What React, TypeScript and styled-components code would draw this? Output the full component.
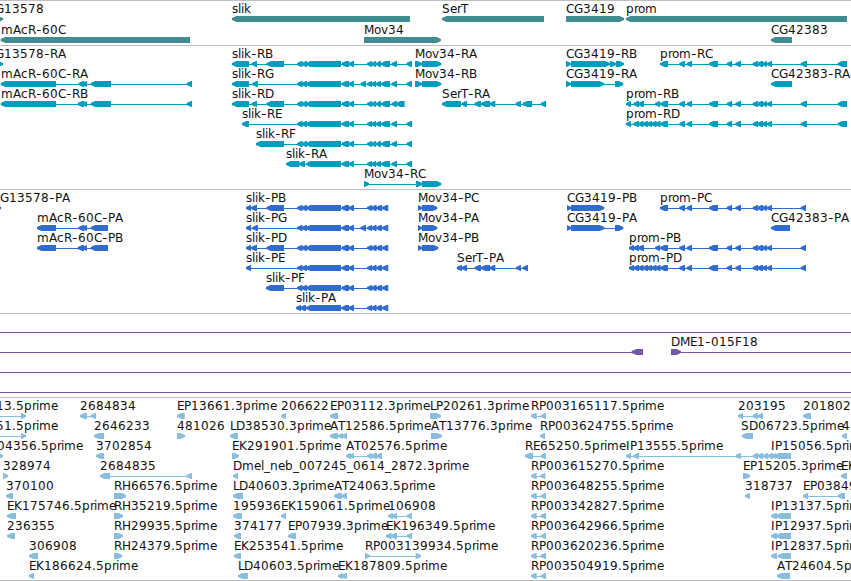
import styled, { createGlobalStyle } from "styled-components";

const GlobalStyle = createGlobalStyle`
  body {
    margin: 0;
    background: #ffffff;
    overflow: hidden;
  }
`;

const Browser = styled.main`
  display: flex;
  flex-direction: column;
  width: 851px;
  height: 581px;
  overflow: hidden;
  box-sizing: border-box;
  border-bottom: 1px solid #bebebe;
`;

const TrackPanel = styled.section<{ $height: number; $color: string }>`
  display: flex;
  flex-direction: column;
  flex: none;
  box-sizing: border-box;
  height: ${(props) => props.$height}px;
  padding-top: 1px;
  border-top: 1px solid #bebebe;
  color: ${(props) => props.$color};
`;

const Lane = styled.svg<{ $height: number }>`
  display: block;
  flex: none;
  width: 851px;
  height: ${(props) => props.$height}px;
  overflow: hidden;
  fill: currentColor;
`;

const Label = styled.text`
  font-family: "DejaVu Sans", sans-serif;
  font-size: 12px;
  fill: #111111;
`;

// Inter has the longer, thinner hyphen
const Dash = styled.tspan`
  font-family: Inter, sans-serif;
`;

type Block = [number, number];

interface Feature {
  label?: string;
  labelX?: number;
  right?: boolean;
  // where the thin line runs when it goes past the blocks
  from?: number;
  to?: number;
  blocks: Block[];
}

interface Track {
  id: string;
  color: string;
  height: number;
  laneHeight: number;
  lanes: Feature[][];
}

// whole pixel advances of the label font
const advances: { [char: string]: number } = {
  A: 8, B: 8, C: 8, D: 9, E: 7, F: 7, G: 9, H: 9, I: 4, K: 8, L: 6, M: 10,
  P: 7, R: 8, S: 8, T: 7, b: 8, c: 7, e: 7, i: 3, k: 7, l: 3, m: 12, n: 8,
  o: 7, p: 8, r: 4, s: 6, v: 7, "-": 6, ".": 4, _: 6,
};

const charPositions = (label: string, start: number) => {
  let x = start;
  return label
    .split("")
    .map((char) => {
      const current = x;
      x += advances[char] || 8;
      return current;
    })
    .join(" ");
};

const left = (label: string, ...blocks: Block[]): Feature => ({ label, blocks });
const right = (label: string, ...blocks: Block[]): Feature => ({
  label,
  blocks,
  right: true,
});

// slik exons
const slikCore: Block[] = [[297, 302.5], [301.5, 307], [306, 341]];
const slikMid: Block[] = [[341.5, 349], [348.5, 354]];
const slikTail: Block[] = [
  [367, 372], [371, 376], [375.5, 381], [381, 390], [391.5, 397], [406.5, 412],
];
const slikShort: Block[] = [[367, 372], [371, 376.5], [376, 382], [382, 388.3]];
const slikRest: Block[] = [...slikCore, ...slikMid, ...slikTail];
const slikCoding: Block[] = [...slikCore, ...slikMid, ...slikShort];

// prom exons
const promMid: Block[] = [
  [660, 668], [679.3, 685], [686.7, 692], [709, 718], [726.7, 732],
  [735.3, 741], [752.7, 758], [757, 763], [762, 767], [767, 772],
];
const promRest: Block[] = [...promMid, [800.7, 807], [837.7, 847]];
const promCoding: Block[] = [...promMid, [800.7, 806]];

const serTRest: Block[] = [[474.5, 481], [481, 490], [489.5, 495.3]];

const tracks: Track[] = [
  {
    id: "genes",
    color: "#408c90",
    height: 45,
    laneHeight: 21,
    lanes: [
      [
        { label: "CG13578", labelX: -13, right: true, blocks: [[-10, 3]] },
        left("slik", [232, 410]),
        left("SerT", [442, 544]),
        right("CG3419", [566, 624]),
        left("prom", [626, 847]),
      ],
      [
        { label: "mAcR-60C", labelX: 1, blocks: [[0.7, 190]] },
        right("Mov34", [364, 441]),
        left("CG42383", [771, 792]),
      ],
    ],
  },
  {
    id: "transcripts",
    color: "#009dbf",
    height: 144,
    laneHeight: 20,
    lanes: [
      [
        { label: "CG13578-RA", labelX: -13, right: true, blocks: [[-10, 3]] },
        left("slik-RB", [232, 249], [251.5, 257], [266.5, 284], ...slikRest),
        right("Mov34-RA", [415, 422], [422, 441.3]),
        right("CG3419-RB", [566, 571], [571, 610], [610, 616], [616, 624]),
        left("prom-RC", ...promRest),
      ],
      [
        {
          label: "mAcR-60C-RA",
          labelX: 1,
          blocks: [[0.7, 56], [78.5, 84.5], [82.5, 87], [90.7, 111], [186.7, 192]],
        },
        left("slik-RG", [232, 249], [252.3, 258], ...slikCore, ...slikMid, [360.5, 366], ...slikTail),
        right("Mov34-RB", [415, 422], [422, 441.3]),
        right("CG3419-RA", [566, 571], [571, 604], [615, 623.3]),
        left("CG42383-RA", [771, 792]),
      ],
      [
        {
          label: "mAcR-60C-RB",
          labelX: 1,
          blocks: [[0.7, 56], [77.7, 84], [82.5, 87], [90.7, 111], [186.7, 192]],
        },
        left(
          "slik-RD",
          [232, 249], [251.5, 257], [266.5, 284],
          ...slikCore, ...slikMid, ...slikTail.slice(0, 5), [396, 404.7]
        ),
        left("SerT-RA", [442, 461], [461.5, 467], ...serTRest, [515.5, 521], [522.5, 532], [540.7, 546]),
        left("prom-RB", [626, 631], [633.3, 639], [638, 644], [655, 660], ...promRest),
      ],
      [
        left("slik-RE", [242, 249], ...slikRest),
        left(
          "prom-RD",
          [626, 631], [633.3, 639], [638, 643.5], [642.5, 648],
          [646.8, 652], [651, 656.5], [655, 660.5], ...promRest
        ),
      ],
      [left("slik-RF", [256, 284], ...slikRest)],
      [left("slik-RA", [286, 299.3], [299, 305], ...slikRest.slice(2))],
      [right("Mov34-RC", [364, 369], [416, 422], [422, 441.3])],
    ],
  },
  {
    id: "proteins",
    color: "#306ccd",
    height: 124,
    laneHeight: 20,
    lanes: [
      [
        { label: "CG13578-PA", labelX: -8, right: true, blocks: [[-10, 1]] },
        left("slik-PB", [246, 251], [251, 257], [266.5, 284], ...slikCoding),
        right("Mov34-PC", [418, 422], [422, 437.3]),
        right("CG3419-PB", [567, 571], [571, 604.3]),
        left("prom-PC", ...promCoding),
      ],
      [
        left("mAcR-60C-PA", [37, 56], [78.5, 84.5], [82.5, 87], [90.7, 108]),
        left("slik-PG", [246, 251], [252.3, 258], ...slikCore, ...slikMid, [360.5, 366], ...slikShort),
        right("Mov34-PA", [418, 422], [422, 437.3]),
        right("CG3419-PA", [567, 571], [571, 604.3], [615, 623.3]),
        left("CG42383-PA", [771, 790]),
      ],
      [
        left("mAcR-60C-PB", [37, 56], [77.7, 84], [82.5, 87], [90.7, 108]),
        left("slik-PD", [246, 251], [251, 257], [266.5, 284], ...slikCoding),
        right("Mov34-PB", [418, 422], [422, 438.3]),
        left("prom-PB", [629, 634], [633.3, 639], [638, 644], [655, 660], ...promCoding),
      ],
      [
        left("slik-PE", [246, 251], ...slikCoding),
        {
          label: "SerT-PA",
          labelX: 457,
          blocks: [[456.7, 462], [461.5, 467], ...serTRest, [516, 521], [522.5, 528]],
        },
        left(
          "prom-PD",
          [629, 634], [633.3, 639], [638, 643.5], [642.5, 648],
          [646.8, 652], [651, 656.5], [655, 660.5], ...promCoding
        ),
      ],
      [left("slik-PF", [266, 284], ...slikCoding)],
      [left("slik-PA", [296, 301], [300, 306], ...slikCoding.slice(2))],
    ],
  },
  {
    id: "clones",
    color: "#7657a5",
    height: 84,
    laneHeight: 20,
    lanes: [
      [{ from: -5, to: 856, blocks: [] }],
      [
        { from: -5, blocks: [[631.7, 643]] },
        { label: "DME1-015F18", labelX: 671, right: true, to: 856, blocks: [[671, 681]] },
      ],
      [{ from: -5, to: 856, blocks: [] }],
      [{ from: -5, to: 856, blocks: [] }],
    ],
  },
  {
    id: "ests",
    color: "#89bddd",
    height: 183,
    laneHeight: 20,
    lanes: [
      [
        { label: "13.5prime", labelX: -4, right: true, from: -5, blocks: [[21, 26]] },
        left("2684834", [80, 87], [90.7, 96]),
        left("EP13661.3prime", [177, 184.7]),
        left("206622", [281, 286]),
        left("EP03112.3prime", [330, 338]),
        right("LP20261.3prime", [430, 441]),
        left("RP003165117.5prime", [531, 536.7], [540.7, 546]),
        left("203195", [738, 743], [752.7, 758], [757.7, 763]),
        left("201802", [803, 811]),
      ],
      [
        { label: "51.5prime", labelX: -4, right: true, from: -5, blocks: [[21, 26]] },
        left("2646233", [94, 104]),
        right("481026", [177, 185]),
        left("LD38530.3prime", [230, 238]),
        left("AT12586.5prime", [330, 338], [338, 343], [341.7, 347]),
        right("AT13776.3prime", [431, 442]),
        left("RP003624755.5prime", [540, 545]),
        { label: "SD06723.5prime", labelX: 741, blocks: [[741.7, 753]] },
        left("4", [842, 847]),
      ],
      [
        { label: "04356.5prime", labelX: -3, right: true, blocks: [[-2, 3]] },
        left("3702854", [96, 104]),
        right("EK291901.5prime", [232, 239]),
        left("AT02576.5prime", [346, 351], [349.5, 354], [367, 372], [371, 377], [376, 382]),
        left("RE65250.5prime", [525, 533], [540.5, 546]),
        left(
          "IP13555.5prime",
          [626, 631], [633.3, 639], [735.7, 741], [752.7, 758],
          [757.5, 763], [762.5, 768], [767.5, 773]
        ),
        { label: "IP15056.5prime", labelX: 771, blocks: [[771.7, 776], [774, 791]] },
      ],
      [
        right("328974", [3, 8]),
        left("2684835", [100, 110], [186.5, 192]),
        left("Dmel_neb_007245_0614_2872.3prime", [233, 238]),
        left("RP003615270.5prime", [531, 536.7], [540.3, 545.3]),
        right("EP15205.3prime", [743, 750]),
        left("EK", [841, 847]),
      ],
      [
        left("370100", [6, 13]),
        right("RH66576.5prime", [114, 126]),
        left("LD40603.3prime", [233, 243]),
        left("AT24063.5prime", [334, 342], [341.5, 347]),
        left("RP003648255.5prime", [531, 536.7], [540.7, 546]),
        left("318737", [745, 750]),
        left("EP03849.3prime", [803, 808], [837.7, 845]),
      ],
      [
        left("EK175746.5prime", [7, 16]),
        right("RH35219.5prime", [114, 123]),
        left("195936", [233, 242]),
        left("EK159061.5prime", [281, 286]),
        left("106908", [388, 393], [392, 397], [406.7, 412]),
        left("RP003342827.5prime", [531, 536.7], [540.7, 546]),
        left("IP13137.5prime", [771, 777], [776, 791]),
      ],
      [
        left("236355", [7, 15]),
        right("RH29935.5prime", [114, 123]),
        left("374177", [234, 241]),
        left("EP07939.3prime", [288, 296]),
        left("EK196349.5prime", [386, 391.5], [390.5, 397], [406.7, 412]),
        left("RP003642966.5prime", [531, 536.7], [540.7, 546]),
        left("IP12937.5prime", [771, 777], [776, 791]),
      ],
      [
        left("306908", [29, 38]),
        right("RH24379.5prime", [114, 122.3]),
        left("EK253541.5prime", [234, 241]),
        right("RP003139934.5prime", [365, 370], [415.7, 421]),
        left("RP003620236.5prime", [531, 536.7], [540.7, 546]),
        left("IP12837.5prime", [771, 777], [778, 791]),
      ],
      [
        left("EK186624.5prime", [29, 34]),
        left("LD40603.5prime", [238, 248]),
        left("EK187809.5prime", [338, 343], [341.7, 347]),
        left("RP003504919.5prime", [531, 536.7], [540.7, 546]),
        left("AT24604.5prime", [777, 790]),
      ],
    ],
  },
];

const BASELINE = 11;
const GLYPH_TOP = 14;

const arrowPath = ([start, end]: Block, isRight?: boolean) => {
  const head = Math.min(4.5, end - start);
  const tip = isRight ? end : start;
  const neck = isRight ? end - head : start + head;
  const tail = isRight ? start : end;
  const mid = GLYPH_TOP + 3;
  const bottom = GLYPH_TOP + 6;
  return `M${tip} ${mid - 1}L${neck} ${GLYPH_TOP}H${tail}V${bottom}H${neck}L${tip} ${mid + 1}Z`;
};

const FeatureGlyph = ({ feature }: { feature: Feature }) => {
  const { label, labelX, blocks, from, to } = feature;
  const start = from ?? blocks[0][0] + 1;
  const end = to ?? blocks[blocks.length - 1][1] - 1;
  return (
    <g>
      {label && (
        <Label x={charPositions(label, labelX ?? Math.floor(blocks[0][0]))} y={BASELINE}>
          {label
            .split(/(-)/)
            .map((part, index) => (part === "-" ? <Dash key={index}>{part}</Dash> : part))}
        </Label>
      )}
      <rect x={start} y={GLYPH_TOP + 3} width={end - start} height={1} />
      {blocks.map((block, index) => (
        <path key={index} d={arrowPath(block, feature.right)} />
      ))}
    </g>
  );
};

const App = () => {
  return (
    <>
      <GlobalStyle />
      <Browser>
        {tracks.map((track) => (
          <TrackPanel key={track.id} $height={track.height} $color={track.color}>
            {track.lanes.map((lane, index) => (
              <Lane key={index} $height={track.laneHeight}>
                {lane.map((feature, i) => (
                  <FeatureGlyph key={i} feature={feature} />
                ))}
              </Lane>
            ))}
          </TrackPanel>
        ))}
      </Browser>
    </>
  );
};

export default App;
